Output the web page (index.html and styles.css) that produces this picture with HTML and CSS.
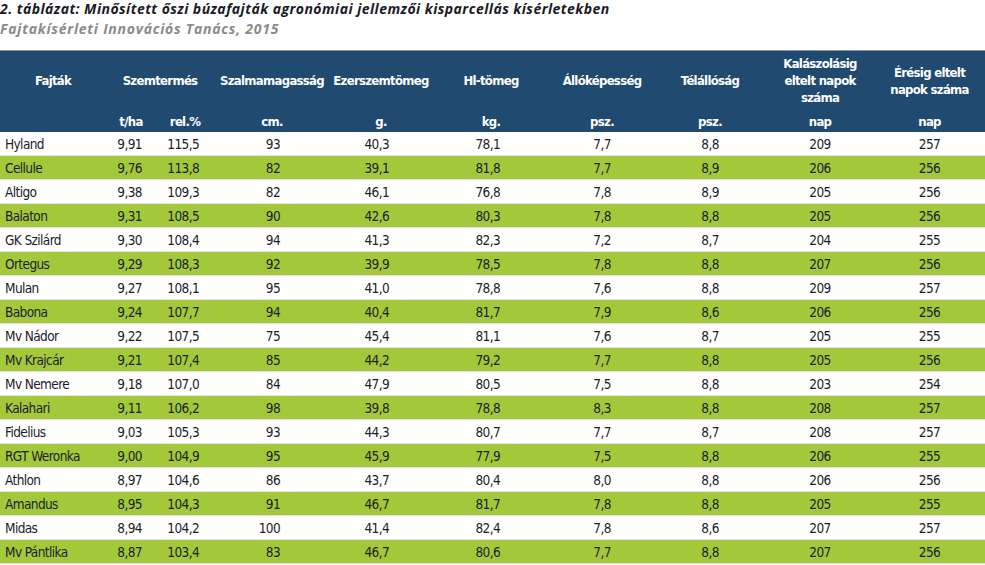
FILE: index.html
```html
<!DOCTYPE html>
<html lang="hu">
<head>
<meta charset="utf-8">
<link rel="stylesheet" href="styles.css">
</head>
<body>
<div class="caption">
  <div class="title">2. táblázat: Minősített őszi búzafajták agronómiai jellemzői kisparcellás kísérletekben</div>
  <div class="subtitle">Fajtakísérleti Innovációs Tanács, 2015</div>
</div>
<table class="data">
  <colgroup>
    <col class="w1"><col class="w2"><col class="w3"><col class="w4"><col class="w5">
    <col class="w6"><col class="w7"><col class="w8"><col class="w9"><col class="w10">
  </colgroup>
  <thead>
    <tr class="hrow">
      <th>Fajták</th>
      <th colspan="2">Szemtermés</th>
      <th>Szalmamagasság</th>
      <th>Ezerszemtömeg</th>
      <th>Hl-tömeg</th>
      <th>Állóképesség</th>
      <th>Télállóság</th>
      <th>Kalászolásig<br>eltelt napok<br>száma</th>
      <th>Érésig eltelt<br>napok száma</th>
    </tr>
    <tr class="urow">
      <th></th><th>t/ha</th><th>rel.%</th><th>cm.</th><th>g.</th><th>kg.</th><th>psz.</th><th>psz.</th><th>nap</th><th>nap</th>
    </tr>
  </thead>
  <tbody>
    <tr><td>Hyland</td><td>9,91</td><td>115,5</td><td>93</td><td>40,3</td><td>78,1</td><td>7,7</td><td>8,8</td><td>209</td><td>257</td></tr>
    <tr class="g"><td>Cellule</td><td>9,76</td><td>113,8</td><td>82</td><td>39,1</td><td>81,8</td><td>7,7</td><td>8,9</td><td>206</td><td>256</td></tr>
    <tr><td>Altigo</td><td>9,38</td><td>109,3</td><td>82</td><td>46,1</td><td>76,8</td><td>7,8</td><td>8,9</td><td>205</td><td>256</td></tr>
    <tr class="g"><td>Balaton</td><td>9,31</td><td>108,5</td><td>90</td><td>42,6</td><td>80,3</td><td>7,8</td><td>8,8</td><td>205</td><td>256</td></tr>
    <tr><td>GK Szilárd</td><td>9,30</td><td>108,4</td><td>94</td><td>41,3</td><td>82,3</td><td>7,2</td><td>8,7</td><td>204</td><td>255</td></tr>
    <tr class="g"><td>Ortegus</td><td>9,29</td><td>108,3</td><td>92</td><td>39,9</td><td>78,5</td><td>7,8</td><td>8,8</td><td>207</td><td>256</td></tr>
    <tr><td>Mulan</td><td>9,27</td><td>108,1</td><td>95</td><td>41,0</td><td>78,8</td><td>7,6</td><td>8,8</td><td>209</td><td>257</td></tr>
    <tr class="g"><td>Babona</td><td>9,24</td><td>107,7</td><td>94</td><td>40,4</td><td>81,7</td><td>7,9</td><td>8,6</td><td>206</td><td>256</td></tr>
    <tr><td>Mv Nádor</td><td>9,22</td><td>107,5</td><td>75</td><td>45,4</td><td>81,1</td><td>7,6</td><td>8,7</td><td>205</td><td>255</td></tr>
    <tr class="g"><td>Mv Krajcár</td><td>9,21</td><td>107,4</td><td>85</td><td>44,2</td><td>79,2</td><td>7,7</td><td>8,8</td><td>205</td><td>256</td></tr>
    <tr><td>Mv Nemere</td><td>9,18</td><td>107,0</td><td>84</td><td>47,9</td><td>80,5</td><td>7,5</td><td>8,8</td><td>203</td><td>254</td></tr>
    <tr class="g"><td>Kalahari</td><td>9,11</td><td>106,2</td><td>98</td><td>39,8</td><td>78,8</td><td>8,3</td><td>8,8</td><td>208</td><td>257</td></tr>
    <tr><td>Fidelius</td><td>9,03</td><td>105,3</td><td>93</td><td>44,3</td><td>80,7</td><td>7,7</td><td>8,7</td><td>208</td><td>257</td></tr>
    <tr class="g"><td>RGT Weronka</td><td>9,00</td><td>104,9</td><td>95</td><td>45,9</td><td>77,9</td><td>7,5</td><td>8,8</td><td>206</td><td>255</td></tr>
    <tr><td>Athlon</td><td>8,97</td><td>104,6</td><td>86</td><td>43,7</td><td>80,4</td><td>8,0</td><td>8,8</td><td>206</td><td>256</td></tr>
    <tr class="g"><td>Amandus</td><td>8,95</td><td>104,3</td><td>91</td><td>46,7</td><td>81,7</td><td>7,8</td><td>8,8</td><td>205</td><td>255</td></tr>
    <tr><td>Midas</td><td>8,94</td><td>104,2</td><td>100</td><td>41,4</td><td>82,4</td><td>7,8</td><td>8,6</td><td>207</td><td>257</td></tr>
    <tr class="g"><td>Mv Pántlika</td><td>8,87</td><td>103,4</td><td>83</td><td>46,7</td><td>80,6</td><td>7,7</td><td>8,8</td><td>207</td><td>256</td></tr>
  </tbody>
</table>
</body>
</html>
```
FILE: styles.css
```css
html, body {
  margin: 0;
  padding: 0;
  background: #ffffff;
}
.caption {
  font-family: "Open Sans", "DejaVu Sans", sans-serif;
  font-weight: 700;
  font-style: italic;
  font-size: 14px;
  line-height: 18px;
  height: 50px;
}
.title {
  color: #1b1b26;
  letter-spacing: 0.45px;
}
.subtitle {
  color: #8b8b8b;
  margin-top: 2px;
  letter-spacing: 0.75px;
}
.data {
  border-collapse: collapse;
  table-layout: fixed;
  width: 985px;
  font-family: "DejaVu Sans Condensed", "Liberation Sans", sans-serif;
  font-size: 13.5px;
  letter-spacing: -0.6px;
  color: #1c1c2a;
}
.w1 { width: 106px; }
.w2 { width: 50px; }
.w3 { width: 58px; }
.w4 { width: 116px; }
.w5 { width: 102px; }
.w6 { width: 118px; }
.w7 { width: 104px; }
.w8 { width: 112px; }
.w9 { width: 108px; }
.w10 { width: 111px; }
thead th {
  background: #214a71;
  color: #ffffff;
  font-weight: 700;
  font-size: 13px;
  letter-spacing: -0.7px;
  text-align: center;
  padding: 0;
  line-height: 17px;
}
.hrow th {
  height: 59px;
  vertical-align: middle;
  border-top: 1px solid #8a94a0;
}
.urow th {
  height: 22px;
  vertical-align: middle;
}
tbody td {
  height: 23px;
  padding: 0;
  border-bottom: 1px solid #e3e3e3;
  text-align: center;
  vertical-align: middle;
  line-height: 16px;
}
tbody tr.g td {
  background: #a3c93a;
}
tbody td:nth-child(1) { text-align: left; padding-left: 5px; }
tbody td:nth-child(2) { text-align: right; padding-right: 14px; }
tbody td:nth-child(3) { text-align: right; padding-right: 15px; }
tbody td:nth-child(4) { text-align: right; padding-right: 50px; }
tbody td:nth-child(5) { text-align: right; padding-right: 43px; }
tbody td:nth-child(6) { text-align: right; padding-right: 50px; }
```
